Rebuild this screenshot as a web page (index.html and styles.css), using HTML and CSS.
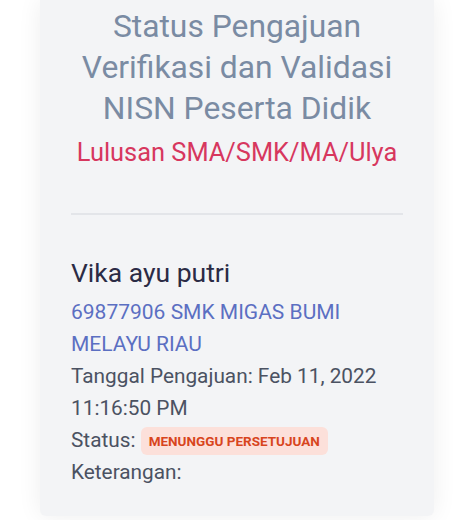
FILE: index.html
```html
<!DOCTYPE html>
<html lang="id">
<head>
<meta charset="utf-8">
<link rel="stylesheet" href="styles.css">
</head>
<body>
<div class="page">
  <section class="card">
    <header class="head">
      <h1 class="title">Status Pengajuan Verifikasi dan Validasi NISN Peserta Didik</h1>
      <p class="subtitle">Lulusan SMA/SMK/MA/Ulya</p>
    </header>
    <hr class="divider">
    <div class="entry">
      <h2 class="name">Vika ayu putri</h2>
      <p class="school">69877906 SMK MIGAS BUMI MELAYU RIAU</p>
      <p class="line">Tanggal Pengajuan: Feb 11, 2022 11:16:50 PM</p>
      <p class="line">Status: <span class="badge">MENUNGGU PERSETUJUAN</span></p>
      <p class="line">Keterangan:</p>
    </div>
  </section>
</div>
</body>
</html>
```
FILE: styles.css
```css
* { box-sizing: border-box; }
html, body { margin: 0; padding: 0; background: #ffffff; }
body { font-family: Roboto, "Noto Sans", Arial, sans-serif; }
.page { width: 474px; height: 520px; overflow: hidden; padding: 0 40px; }
.card {
  background: #f3f4f6;
  box-shadow: 0 0 24px rgba(0,0,0,0.07);
  border-radius: 0 0 6px 6px;
  padding: 6px 31px 28px 31px;
}
.head { text-align: center; }
.title {
  margin: 0;
  font-size: 31.8px;
  line-height: 41px;
  font-weight: 400;
  color: #7a8ba3;
}
.subtitle {
  margin: 5px 0 0;
  font-size: 25.4px;
  line-height: 36px;
  color: #d7375e;
}
.divider {
  border: 0;
  border-top: 2px solid #e3e5e9;
  margin: 43px 0 0 0;
}
.entry { padding-top: 42px; }
.name {
  margin: 0 0 7px;
  font-size: 26.5px;
  line-height: 32px;
  font-weight: 400;
  color: #2b2b45;
}
.school {
  margin: 0;
  font-size: 21px;
  line-height: 32px;
  color: #5b6fc2;
}
.line {
  margin: 0;
  font-size: 20.8px;
  line-height: 32px;
  color: #4b5262;
}
.badge {
  display: inline-block;
  background: #fce0da;
  color: #d8451d;
  font-size: 13.5px;
  font-weight: 700;
  line-height: 28px;
  padding: 0 8px;
  border-radius: 6px;
  vertical-align: 1px;
  margin-left: 0;
}
```
